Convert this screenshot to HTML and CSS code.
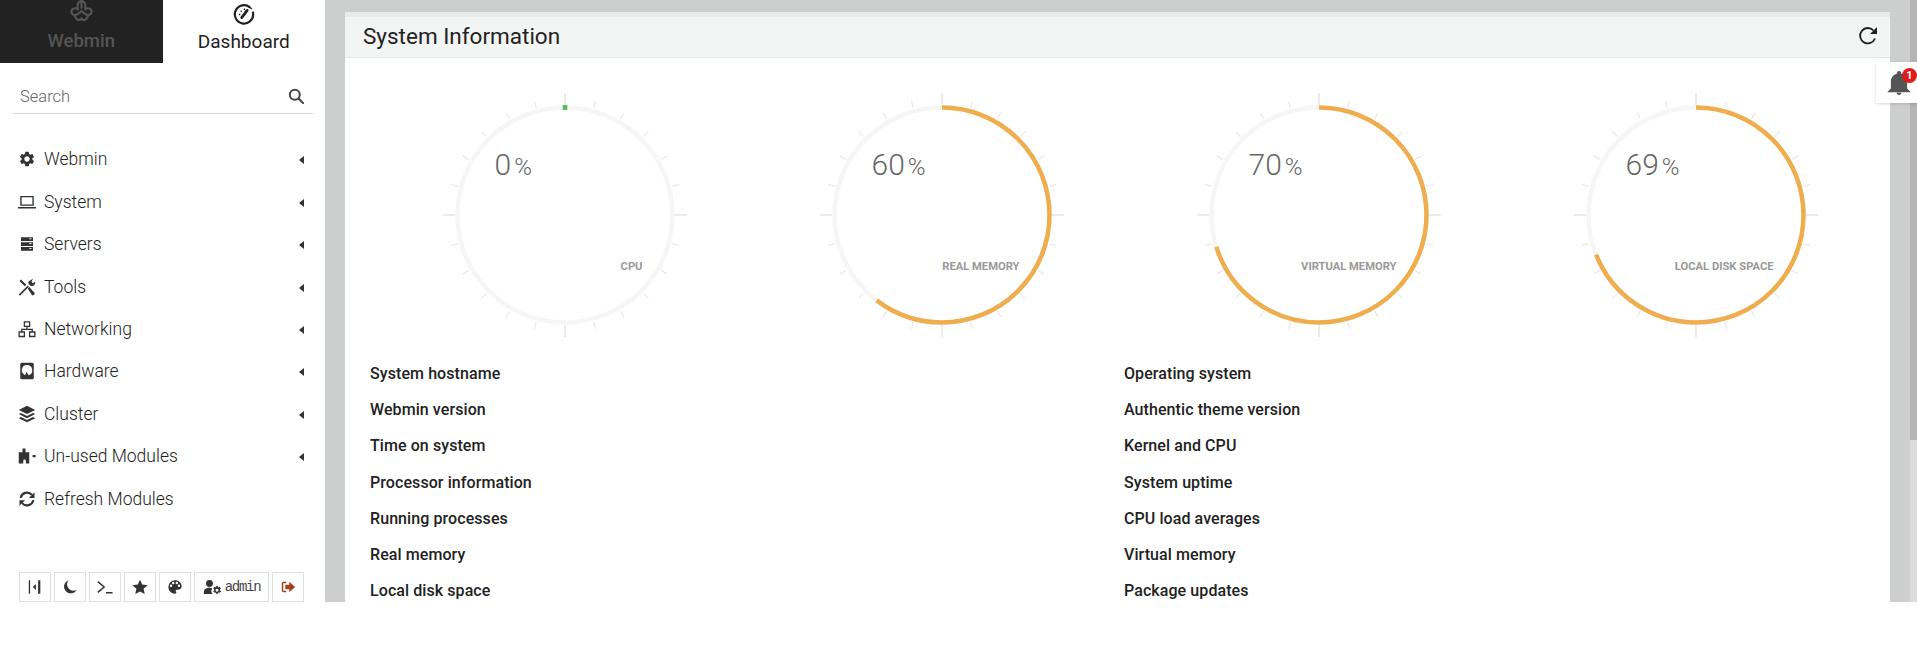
FILE: index.html
```html
<!DOCTYPE html>
<html>
<head>
    <meta charset="utf-8">
    <title>Dashboard</title>
    <link rel="stylesheet" href="styles.css">
</head>
<body>
    <svg class="sprite" width="0" height="0">
        <defs>
            <g id="ticks">
                <line class="tick long" x1="125" y1="3" x2="125" y2="15"/>
                <line class="tick" x1="125" y1="7" x2="125" y2="14" transform="rotate(15 125 125)"/>
                <line class="tick" x1="125" y1="7" x2="125" y2="14" transform="rotate(30 125 125)"/>
                <line class="tick" x1="125" y1="7" x2="125" y2="14" transform="rotate(45 125 125)"/>
                <line class="tick" x1="125" y1="7" x2="125" y2="14" transform="rotate(60 125 125)"/>
                <line class="tick" x1="125" y1="7" x2="125" y2="14" transform="rotate(75 125 125)"/>
                <line class="tick long" x1="125" y1="3" x2="125" y2="15" transform="rotate(90 125 125)"/>
                <line class="tick" x1="125" y1="7" x2="125" y2="14" transform="rotate(105 125 125)"/>
                <line class="tick" x1="125" y1="7" x2="125" y2="14" transform="rotate(120 125 125)"/>
                <line class="tick" x1="125" y1="7" x2="125" y2="14" transform="rotate(135 125 125)"/>
                <line class="tick" x1="125" y1="7" x2="125" y2="14" transform="rotate(150 125 125)"/>
                <line class="tick" x1="125" y1="7" x2="125" y2="14" transform="rotate(165 125 125)"/>
                <line class="tick long" x1="125" y1="3" x2="125" y2="15" transform="rotate(180 125 125)"/>
                <line class="tick" x1="125" y1="7" x2="125" y2="14" transform="rotate(195 125 125)"/>
                <line class="tick" x1="125" y1="7" x2="125" y2="14" transform="rotate(210 125 125)"/>
                <line class="tick" x1="125" y1="7" x2="125" y2="14" transform="rotate(225 125 125)"/>
                <line class="tick" x1="125" y1="7" x2="125" y2="14" transform="rotate(240 125 125)"/>
                <line class="tick" x1="125" y1="7" x2="125" y2="14" transform="rotate(255 125 125)"/>
                <line class="tick long" x1="125" y1="3" x2="125" y2="15" transform="rotate(270 125 125)"/>
                <line class="tick" x1="125" y1="7" x2="125" y2="14" transform="rotate(285 125 125)"/>
                <line class="tick" x1="125" y1="7" x2="125" y2="14" transform="rotate(300 125 125)"/>
                <line class="tick" x1="125" y1="7" x2="125" y2="14" transform="rotate(315 125 125)"/>
                <line class="tick" x1="125" y1="7" x2="125" y2="14" transform="rotate(330 125 125)"/>
                <line class="tick" x1="125" y1="7" x2="125" y2="14" transform="rotate(345 125 125)"/>
            </g>
        </defs>
    </svg>

    <div class="app">
        <div class="sidebar">
            <div class="tabs">
                <div class="tab tab-dark">
                    <svg class="tab-icon logo" viewBox="0 0 24 24" fill="none" stroke="#555" stroke-width="2.2" stroke-linejoin="round">
                        <path d="M8 11V5C8 3 10 1 12 1s4 2 4 4v6M12 2v7"/>
                        <path d="M8 9c-3-1-6 0-6.500 2.500S3 16 6 15.500c2.500-.5 4-2 6-4 2 2 3.500 3.500 6 4 3 .5 5-1.500 4.500-4S19 8 16 9"/>
                        <path d="M5 15.500c0 3 2.500 5.500 4.500 5.500 1.300 0 2-.8 2.500-2 .5 1.200 1.200 2 2.500 2 2 0 4.500-2.500 4.500-5.500"/>
                    </svg>
                    <span>Webmin</span>
                </div>
                <div class="tab">
                    <svg class="tab-icon dial" viewBox="0 0 24 24" fill="none" stroke="#222" stroke-width="2.400">
                        <path d="M18.500 4.800a10 10 0 1 0 3.500 7.200c0-1-.1-1.700-.4-2.600"/>
                        <path d="M9.500 16 15.500 8" stroke-width="3" stroke-linecap="round"/>
                        <path d="M6.500 12.500h1.500M8.500 8.500l1 1M12.500 6v1.500M17 3.500l3.500 3" stroke-width="1.500"/>
                    </svg>
                    <span>Dashboard</span>
                </div>
            </div>

            <div class="search">
                <span>Search</span>
                <svg class="search-icon" viewBox="0 0 16 16" fill="none" stroke="#444" stroke-width="2">
                    <circle cx="6.800" cy="6.800" r="5"/>
                    <path d="M10.500 10.500 15 15" stroke-linecap="round"/>
                </svg>
            </div>

            <ul class="menu">
                <li>
                    <svg class="icon" viewBox="0 0 24 24"><path d="M19.140 12.940c.04-.3.06-.61.06-.94 0-.32-.02-.64-.07-.94l2.030-1.580a.49.49 0 0 0 .12-.61l-1.920-3.320a.488.488 0 0 0-.59-.22l-2.390.96c-.5-.38-1.030-.7-1.620-.94l-.36-2.540a.484.484 0 0 0-.48-.41h-3.840c-.24 0-.43.17-.47.41l-.36 2.540c-.59.24-1.130.57-1.620.94l-2.390-.96c-.22-.08-.47 0-.59.22L2.740 8.870c-.12.21-.08.47.12.61l2.030 1.580c-.05.3-.09.63-.09.94s.02.64.07.94l-2.030 1.580a.49.49 0 0 0-.12.61l1.920 3.320c.12.22.37.29.59.22l2.390-.96c.5.38 1.030.7 1.620.94l.36 2.540c.05.24.24.41.48.41h3.840c.24 0 .44-.17.47-.41l.36-2.540c.59-.24 1.130-.56 1.620-.94l2.390.96c.22.08.47 0 .59-.22l1.920-3.320c.12-.22.07-.47-.12-.61l-2.010-1.580zM12 15.600c-1.980 0-3.600-1.620-3.600-3.600s1.620-3.600 3.600-3.600 3.600 1.620 3.600 3.600-1.620 3.600-3.600 3.600z"/></svg>
                    <span class="label">Webmin</span><i class="caret"></i>
                </li>
                <li>
                    <svg class="icon" viewBox="0 0 24 24"><path d="M3 4h18v13H3zM4.800 5.800v9.400h14.400V5.800zM0 18.800h24V20.500H0z" fill-rule="evenodd"/></svg>
                    <span class="label">System</span><i class="caret"></i>
                </li>
                <li>
                    <svg class="icon" viewBox="0 0 24 24"><path d="M4 3h16v5H4zM4 9.500h16v5H4zM4 16h16v5H4z"/><path d="M15 5h3M15 11.500h3M15 18h3" stroke="#fff" stroke-width="1.200"/></svg>
                    <span class="label">Servers</span><i class="caret"></i>
                </li>
                <li>
                    <svg class="icon" viewBox="0 0 24 24"><path d="M1 22 13 10l1.500 1.500-12 12zM15 4l5-3-2 4 2 2 3-2c.5 3.500-2.500 6.500-6 5.500l-3-3c-.5-1-.5-2.500 1-3.500z"/><path d="M2 4 4 2l7 7-2 2zM13 14l2-2 7 7.500c.5 1 0 2-1 3s-2 .5-2.500 0z"/></svg>
                    <span class="label">Tools</span><i class="caret"></i>
                </li>
                <li>
                    <svg class="icon line" viewBox="0 0 24 24" stroke-width="1.700"><path d="M8.500 2.500h7v6h-7zM1.500 16h7v6h-7zM15.500 16h7v6h-7zM12 8.500v4M5 16v-3.500h14V16"/></svg>
                    <span class="label">Networking</span><i class="caret"></i>
                </li>
                <li>
                    <svg class="icon" viewBox="0 0 24 24"><path fill-rule="evenodd" d="M5 1h14a2 2 0 0 1 2 2v18a2 2 0 0 1-2 2H5a2 2 0 0 1-2-2V3a2 2 0 0 1 2-2zm7 3a7 7 0 0 0-2.500 13.500l2-4.500 2.500 4.700A7 7 0 0 0 12 4z"/></svg>
                    <span class="label">Hardware</span><i class="caret"></i>
                </li>
                <li>
                    <svg class="icon" viewBox="0 0 24 24"><path d="M12 1 23 6.500 12 12 1 6.500zM4 10.500l8 4 8-4 3 1.500L12 17.500 1 12zM4 16l8 4 8-4 3 1.500L12 23 1 17.500z"/></svg>
                    <span class="label">Cluster</span><i class="caret"></i>
                </li>
                <li>
                    <svg class="icon" viewBox="0 0 24 24"><path d="M6 2h4v5h5v5h4l1-1.500h3.500v3H20l-1-1.500h-4v10h-4.500v-3.500a1.700 1.700 0 0 0-3.500 0V22H1V7h5z"/></svg>
                    <span class="label">Un-used Modules</span><i class="caret"></i>
                </li>
                <li>
                    <svg class="icon line" viewBox="0 0 24 24" stroke-width="3"><path d="M3.500 10.500a8.700 8.700 0 0 1 15-4"/><path d="M20.500 13.500a8.700 8.700 0 0 1-15 4"/><path class="solid" d="M22 3v7.500h-7.500zM2 21v-7.500h7.500z"/></svg>
                    <span class="label">Refresh Modules</span>
                </li>
            </ul>

            <div class="tools">
                <div class="tool">
                    <svg class="tool-icon" viewBox="0 0 18 18"><path d="M2 1.500h1.500v15H2zM12.500 1.500H15v15h-2.500zM10 5.500v7L6.500 9z"/></svg>
                </div>
                <div class="tool">
                    <svg class="tool-icon" viewBox="0 0 18 18"><path d="M7.500 1.500A7.500 7.500 0 1 0 16.500 12 7 7 0 0 1 7.500 1.500z"/></svg>
                </div>
                <div class="tool">
                    <svg class="tool-icon line" viewBox="0 0 18 18" stroke-width="1.700"><path d="M1 3 8 9l-7 6M10 15.500h7.500"/></svg>
                </div>
                <div class="tool">
                    <svg class="tool-icon" viewBox="0 0 18 18"><path d="m9 .8 2.500 5.500 6 .7-4.500 4 1.300 6L9 14l-5.300 3 1.300-6-4.500-4 6-.7z"/></svg>
                </div>
                <div class="tool">
                    <svg class="tool-icon" viewBox="0 0 24 24"><path d="M12 2a10 10 0 0 0 0 20c1.500 0 2-1 2-1.800 0-1.200-1-1.500-1-2.700 0-1 .8-1.500 1.700-1.500H17c3 0 5-2 5-5 0-5-4.500-9-10-9zm-6 10a1.800 1.800 0 1 1 0-3.600A1.800 1.800 0 0 1 6 12zm3.300-4.300a1.800 1.800 0 1 1 0-3.600 1.800 1.800 0 0 1 0 3.600zm5.400 0a1.800 1.800 0 1 1 0-3.600 1.800 1.800 0 0 1 0 3.600zM18 12a1.800 1.800 0 1 1 0-3.600 1.800 1.800 0 0 1 0 3.600z"/></svg>
                </div>
                <div class="tool tool-user">
                    <svg class="tool-icon wide" viewBox="0 0 22 18"><circle cx="7.500" cy="5" r="4"/><path d="M1 17v-2c0-3 2.500-5 6.500-5 1.500 0 2.500.3 3.300.7A5 5 0 0 0 11 17z"/><path fill-rule="evenodd" d="M15 8h2.500l.4 1.500 1.400-.7 1.400 2-1.100 1 .1 1 1.200 1-1.400 2-1.500-.6-.5 1.500H15l-.4-1.500-1.400.6-1.300-2 1-1v-1l-1-1 1.300-2 1.400.7zm1.200 3a1.700 1.700 0 1 0 0 3.400 1.700 1.700 0 0 0 0-3.400z"/></svg>
                    <span>admin</span>
                </div>
                <div class="tool">
                    <svg class="tool-icon logout" viewBox="0 0 18 18"><path d="M7 3H4a2 2 0 0 0-2 2v8a2 2 0 0 0 2 2h3v-1.700H4.200a.6.600 0 0 1-.5-.5V5.200c0-.3.2-.5.5-.5H7z"/><path d="M10.500 3 17 9l-6.500 6v-3.500H6v-5h4.500z"/></svg>
                </div>
            </div>
        </div>

        <div class="main">
            <div class="panel">
                <div class="panel-head">
                    <h3>System Information</h3>
                    <svg class="reload" viewBox="0 0 20 20" fill="none" stroke="#222" stroke-width="1.800">
                        <path d="M17 12.500A7.700 7.700 0 1 1 15.500 4.500"/>
                        <path d="M19 1v7h-7z" fill="#222" stroke="none"/>
                    </svg>
                </div>
                <div class="panel-body">
                    <div class="gauges">
                        <div class="gauge">
                            <svg width="250" height="250" viewBox="0 0 250 250">
                                <use href="#ticks"/>
                                <circle class="track" cx="125" cy="125" r="107.500"/>
                                <rect class="zero" x="122.700" y="15" width="4.600" height="5"/>
                            </svg>
                            <div class="value">0<small>%</small></div>
                            <div class="name">CPU</div>
                        </div>
                        <div class="gauge">
                            <svg width="250" height="250" viewBox="0 0 250 250">
                                <use href="#ticks"/>
                                <circle class="track" cx="125" cy="125" r="107.500"/>
                                <circle class="arc" cx="125" cy="125" r="107.500" pathLength="100" stroke-dasharray="60.400 100" transform="rotate(-90 125 125)"/>
                            </svg>
                            <div class="value">60<small>%</small></div>
                            <div class="name">Real Memory</div>
                        </div>
                        <div class="gauge">
                            <svg width="250" height="250" viewBox="0 0 250 250">
                                <use href="#ticks"/>
                                <circle class="track" cx="125" cy="125" r="107.500"/>
                                <circle class="arc" cx="125" cy="125" r="107.500" pathLength="100" stroke-dasharray="70.200 100" transform="rotate(-90 125 125)"/>
                            </svg>
                            <div class="value">70<small>%</small></div>
                            <div class="name">Virtual Memory</div>
                        </div>
                        <div class="gauge">
                            <svg width="250" height="250" viewBox="0 0 250 250">
                                <use href="#ticks"/>
                                <circle class="track" cx="125" cy="125" r="107.500"/>
                                <circle class="arc" cx="125" cy="125" r="107.500" pathLength="100" stroke-dasharray="69 100" transform="rotate(-90 125 125)"/>
                            </svg>
                            <div class="value">69<small>%</small></div>
                            <div class="name">Local Disk Space</div>
                        </div>
                    </div>

                    <div class="info">
                        <div>System hostname</div>
                        <div>Operating system</div>
                        <div>Webmin version</div>
                        <div>Authentic theme version</div>
                        <div>Time on system</div>
                        <div>Kernel and CPU</div>
                        <div>Processor information</div>
                        <div>System uptime</div>
                        <div>Running processes</div>
                        <div>CPU load averages</div>
                        <div>Real memory</div>
                        <div>Virtual memory</div>
                        <div>Local disk space</div>
                        <div>Package updates</div>
                    </div>
                </div>
            </div>
        </div>

        <div class="scrollbar"><div class="thumb"></div></div>

        <div class="notify">
            <svg class="bell" viewBox="0 0 24 24"><path d="M12 23c1.300 0 2.300-.9 2.300-2h-4.600c0 1.100 1 2 2.300 2zm7.500-6v-6c0-3.700-2-6.700-5.500-7.500V3a2 2 0 0 0-4 0v.5C6.500 4.300 4.500 7.300 4.500 11v6L1.500 20v.5h21V20z"/></svg>
            <span class="badge">1</span>
        </div>
    </div>
</body>
</html>
```

FILE: styles.css
```css
* {
    box-sizing: border-box;
}
html, body {
    margin: 0;
    height: 100%;
    background: white;
    overflow: hidden;
}
body {
    font-family: Roboto, "Liberation Sans", sans-serif;
    color: #333;
}
.sprite {
    position: absolute;
}
.app {
    position: relative;
    display: flex;
    height: 602px;
}

/* Sidebar */
.sidebar {
    display: flex;
    flex-direction: column;
    width: 325px;
    background: white;
}
.tabs {
    display: flex;
    height: 63px;
}
.tab {
    flex: 1;
    display: flex;
    flex-direction: column;
    align-items: center;
    font-size: 19px;
    color: #222;
}
.tab-dark {
    background: #222;
    color: #555;
    font-weight: 500;
    font-size: 18.500px;
}
.tab-icon.logo {
    width: 23px;
    height: 23px;
    margin-bottom: 7px;
}
.tab-icon.dial {
    width: 22px;
    height: 22px;
    margin: 3px 0 5px;
}
.search {
    display: flex;
    align-items: center;
    justify-content: space-between;
    height: 51px;
    margin: 0 12px 0 13px;
    padding: 16px 9px 0 7px;
    border-bottom: 1.5px solid #d5d5d5;
    font-size: 16.500px;
    font-weight: 300;
    color: #666;
}
.search-icon {
    width: 16px;
    height: 16px;
}
.menu {
    list-style: none;
    margin: 24px 0 0;
    padding: 0;
}
.menu li {
    display: flex;
    align-items: center;
    height: 42.450px;
    padding: 0 21px 0 18px;
    font-size: 17.500px;
    font-weight: 300;
    color: #222;
}
.icon {
    width: 18px;
    height: 18px;
    margin-right: 8px;
    fill: #333;
    flex: none;
}
.line {
    fill: none;
    stroke: #333;
}
.solid {
    fill: #333;
    stroke: none;
}
.label {
    flex: 1;
}
.caret {
    border-right: 5px solid #333;
    border-top: 4.500px solid transparent;
    border-bottom: 4.500px solid transparent;
    margin-top: 2px;
}
.tools {
    display: flex;
    gap: 3px;
    margin-top: auto;
    padding-left: 19px;
}
.tool {
    display: flex;
    align-items: center;
    justify-content: center;
    gap: 3px;
    width: 32px;
    height: 30px;
    border: 1.5px solid #e0e0e0;
    font-family: "Liberation Mono", monospace;
    font-size: 14px;
    letter-spacing: -1.300px;
    color: #444;
}
.tool-user {
    width: 75px;
}
.tool-icon {
    width: 16px;
    height: 16px;
    fill: #333;
}
.tool-icon.line {
    fill: none;
}
.tool-icon.wide {
    width: 19px;
}
.tool-icon.logout {
    fill: #a5401f;
}

/* Main */
.main {
    flex: 1;
    background: #cdcfce;
    padding: 12px 20px 0;
    overflow: hidden;
}
.panel {
    height: 100%;
    background: white;
    border-top: 5px solid #e9ebeb;
    overflow: hidden;
}
.panel-head {
    display: flex;
    align-items: center;
    justify-content: space-between;
    height: 41px;
    padding: 0 12px 3px 18px;
    background: #f3f5f5;
    border-bottom: 1px solid #e6e6e6;
}
.panel-head h3 {
    margin: 0;
    font-size: 22.500px;
    font-weight: 400;
    color: #222;
}
.reload {
    width: 20px;
    height: 20px;
}
.panel-body {
    padding: 32px 0 0 25px;
}
.gauges {
    display: grid;
    grid-template-columns: repeat(4, 377px);
    margin-left: 6px;
}
.gauge {
    position: relative;
    width: 250px;
    height: 250px;
    margin: 0 auto;
}
.tick {
    stroke: #e4e4e4;
    stroke-width: 1;
}
.tick.long {
    stroke-width: 1.500;
}
.track {
    fill: none;
    stroke: #f6f6f6;
    stroke-width: 4.500;
}
.arc {
    fill: none;
    stroke: #f0ad4e;
    stroke-width: 4.500;
}
.zero {
    fill: #5cb85c;
}
.value {
    position: absolute;
    left: 55px;
    top: 57px;
    font-size: 30px;
    font-weight: 300;
    color: #666;
    white-space: nowrap;
}
.value small {
    margin-left: 3px;
    font-size: 24px;
}
.name {
    position: absolute;
    right: 47px;
    top: 170px;
    font-size: 11.200px;
    font-weight: 700;
    text-transform: uppercase;
    color: #999;
    white-space: nowrap;
}
.info {
    display: grid;
    grid-template-columns: 754px 1fr;
    margin-top: 16px;
}
.info div {
    height: 36.200px;
    line-height: 36.200px;
    font-size: 16px;
    letter-spacing: 0.080px;
    font-weight: 500;
    color: #222;
}

/* Overlays and scrollbar */
.scrollbar {
    width: 7px;
    background: #dcdcdc;
}
.thumb {
    height: 440px;
    background: #b5b5b5;
}
.notify {
    position: absolute;
    top: 62px;
    right: 0;
    width: 41px;
    height: 41px;
    background: white;
    box-shadow: 0 1px 3px rgba(0, 0, 0, 0.15);
}
.bell {
    position: absolute;
    left: 10px;
    top: 8px;
    width: 26px;
    height: 26px;
    fill: #555;
}
.badge {
    position: absolute;
    left: 26px;
    top: 6px;
    width: 15px;
    height: 15px;
    border-radius: 50%;
    background: #e01b1b;
    color: white;
    font-size: 11px;
    font-weight: 700;
    line-height: 15px;
    text-align: center;
}
```
